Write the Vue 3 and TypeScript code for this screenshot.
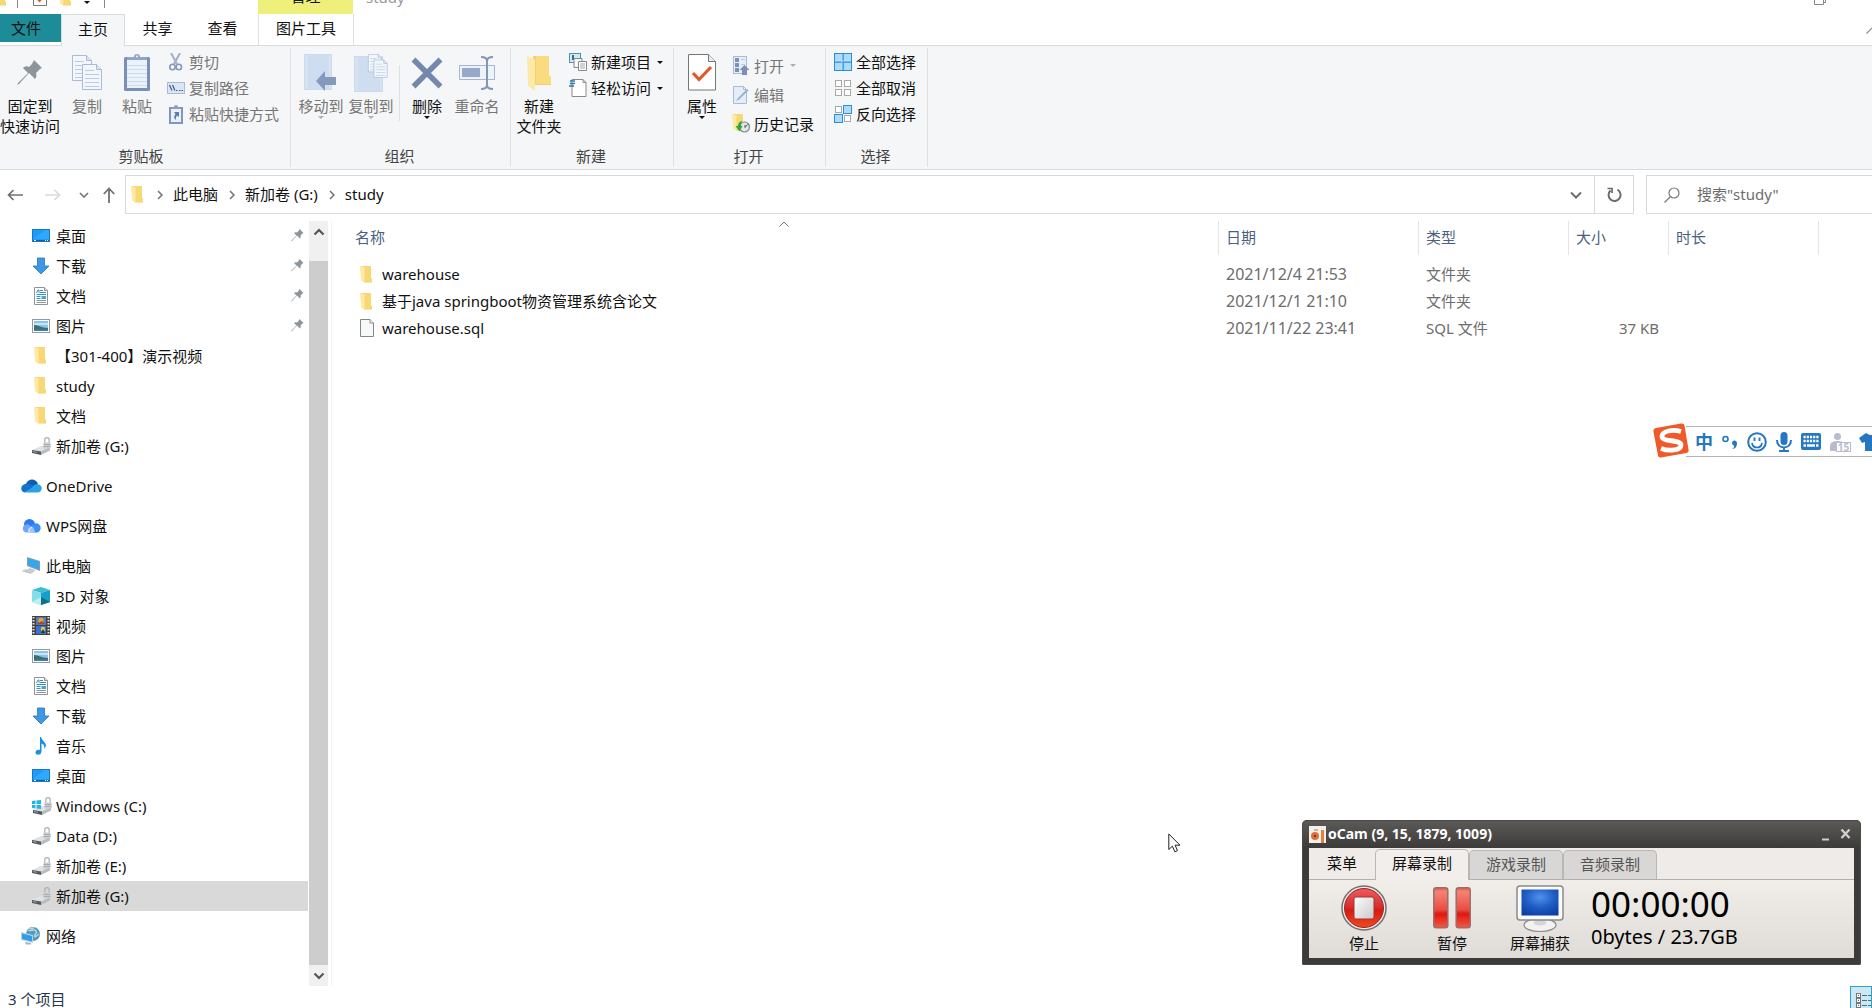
<script setup lang="ts">
import { h, ref, type FunctionalComponent } from 'vue'

interface Glyph { w: number; h: number; body: string }

const folderBody =
  '<path d="M1 1h10v12.500l1 .5v2.500H4z" fill="#f3cc62"/><path d="M1 0h10v12l1 1v3H3z" fill="#f8d775"/><path d="M0 0l4.500 1.500V16L1 14.500z" fill="#ffe9a6"/>'
const driveBody =
  '<path d="M0 13l9-4h9v3l-8 5-10-2z" fill="#dfe1e3"/><path d="M0 13l9 1.500V18l-9-2z" fill="#55575a"/><path d="M9 14.500l9-4.500v3.500L9 18z" fill="#b9bdc0"/><path d="M1 14.500l4 .8" stroke="#9a9ea1"/><path d="M12.800 6V2.800a2.200 2.200 0 0 1 4.400 0V6" fill="none" stroke="#aab0b4" stroke-width="1.200"/><rect x="11.500" y="5.500" width="7" height="6" fill="#c9cdd0"/><path d="M11.500 7.500h7M11.500 9.500h7" stroke="#9ba1a6" stroke-width=".7"/>'
const pinBody =
  '<path d="M17 0l8 8-2 1-1 1-3 3c1 3 0 5-1 6l-6-6-10 11-2 1 1-2 10-10-5-5c2-2 4-2 6-1l3-3 1-2z" fill="#8d959c"/>'
const sheet = (x: number, y: number) =>
  `<path d="M${x}.5 ${y}.5h14l5 5v20h-19z" fill="#f3f7fc" stroke="#a9bbd8"/><path d="M${x + 14}.5 ${y}.5v5h5" fill="#dce6f3" stroke="#a9bbd8"/><path d="M${x + 3} ${y + 6}.500h9M${x + 3} ${y + 10}.500h14M${x + 3} ${y + 14}.500h14M${x + 3} ${y + 18}.500h14M${x + 3} ${y + 22}.500h14" stroke="#bccbe2"/>`

const glyphs: Record<string, Glyph> = {
  folder: { w: 12, h: 17, body: folderBody },
  drive: { w: 19, h: 18, body: driveBody },
  winDrive: {
    w: 20, h: 18,
    body: `<g transform="translate(1 0)">${driveBody}</g><path d="M0 4l3.500-.5v3.500H0zM4.500 3.500L9 3v4H4.500zM0 8h3.500v3.500L0 11zM4.500 8H9v4l-4.500-.5z" fill="#22b4e6"/>`,
  },
  desktop: {
    w: 18, h: 13,
    body: '<rect x=".5" y=".5" width="17" height="12" fill="#1c9bf8" stroke="#1778c4"/><path d="M1 10L13 1h4v9z" fill="#3fb0fb" opacity=".6"/><path d="M1 11.500h16" stroke="#0d5fa8"/><path d="M2 11.500h2M13 11.500h1M15 11.500h1" stroke="#fff"/>',
  },
  download: { w: 18, h: 18, body: '<path d="M5.500 1h7v8h4.500L9 17 1 9h4.500z" fill="#3e97e4" stroke="#2477bd" stroke-width=".8"/>' },
  document: {
    w: 18, h: 18,
    body: '<path d="M2.500.5h10l3 3v14h-13z" fill="#fff" stroke="#8d959b"/><path d="M12.500.5v3h3" fill="#e4e7e9" stroke="#8d959b"/><path d="M4.500 6l1.500-3h1v3M8 3.500h3M8 5.500h6M4.500 7.500h9.500M4.500 9.500h4M4.500 11.500h4" stroke="#3193c9" fill="none"/><rect x="9.500" y="9" width="4.500" height="3" fill="#4ba3d0"/><path d="M4.500 13.500H14M4.500 15.500H14" stroke="#8c9499"/>',
  },
  picture: {
    w: 18, h: 14,
    body: '<rect x=".5" y=".5" width="17" height="13" fill="#fff" stroke="#8f9ba3"/><rect x="2" y="2" width="14" height="10" fill="#8cc4ee"/><path d="M2 4h14v2H2z" fill="#c9e4f5"/><path d="M2 6c5 0 7 3 14 3v3H2z" fill="#3c6f6d"/><path d="M2 10.500h14V12H2z" fill="#477ca6"/>',
  },
  onedrive: {
    w: 21, h: 14,
    body: '<path d="M5 5c2-6 10-6 12 0l-6 6-7-2z" fill="#0a5fb3"/><path d="M4 5c3-1.500 6 0 9 3L4 13.500C-1 13-1 6 4 5z" fill="#1373cc"/><path d="M11 8.500c2-4 5-3.500 6-3 5 0 5 7.500 0 8H4z" fill="#2ba2e8"/>',
  },
  wps: {
    w: 20, h: 14,
    body: '<circle cx="8.500" cy="5.500" r="5.500" fill="#2c7bee"/><circle cx="15" cy="9" r="4.700" fill="#3f8ef8"/><path d="M4.500 13.500a4.300 4.300 0 0 1 0-8c3-1 5 .5 6 3l4 5z" fill="#6ba7fb"/><path d="M7 13.500c-1-3 1-6 4-6 2 1 2 3 3 6z" fill="#9cc5ff"/><path d="M8 13.500c-.5-3 1-4.500 3-5.500" stroke="#fff" fill="none" stroke-width=".8"/>',
  },
  computer: {
    w: 20, h: 18,
    body: '<path d="M6 0l13 4v10L6 9z" fill="#7e9db4"/><path d="M7 1.500l11 3.500v7L7 8z" fill="#33a7ee"/><path d="M8 11l6 2-1 2-6-2z" fill="#b6c1c9"/><path d="M0 14l5-2 9 2-4 3z" fill="#d7dce0"/><path d="M2 14l8 2M4 13l8 2" stroke="#a6adb3" stroke-width=".6"/>',
  },
  cube: {
    w: 18, h: 18,
    body: '<path d="M0 3l9-3 9 3-9 3z" fill="#3bbdd2"/><path d="M0 3l9 3v12l-9-3z" fill="#82dfe8"/><path d="M18 3L9 6v12l9-3z" fill="#16a0c9"/><path d="M0 15l9-5v8z" fill="#baf0f2"/><path d="M9 10l9 5-9 3z" fill="#0b7186"/>',
  },
  video: {
    w: 18, h: 19,
    body: '<rect width="18" height="19" fill="#43413f"/><path d="M1.500 1v17M16.500 1v17" stroke="#e3e3df" stroke-width="2" stroke-dasharray="1.500 1.500"/><rect x="4" y="1" width="10" height="8" fill="#587ab9"/><rect x="4" y="10" width="10" height="8" fill="#3b73cb"/><circle cx="9" cy="4.500" r="2.700" fill="#d9a63b"/><circle cx="11" cy="13" r="2.200" fill="#e8c33d"/><path d="M5 8l5-3 3 3z" fill="#a3443e"/><path d="M9 17l2-4 2 4z" fill="#333"/>',
  },
  music: { w: 18, h: 18, body: '<path d="M8 0h1c1 4 5 5 5 9l-2 3c1-4-1-5-2.500-5.500V14c0 5-6 4.500-6 1.500 0-2 2-3.500 4.500-2.500z" fill="#1490e8"/>' },
  network: {
    w: 20, h: 18,
    body: '<circle cx="12" cy="7" r="7" fill="#5599bd"/><path d="M7 3c3 2 6-2 8 1s-3 3-1 6l4-3M8 1c2 1 4 0 5 0" stroke="#b4d8e4" fill="none" stroke-width="1.500"/><path d="M0 5l12 3v8L0 13z" fill="#b9d2e2"/><path d="M1 6.500l10 2.500v5.500L1 12z" fill="#2b9fe8"/><path d="M4 15l6 1v1.500H5z" fill="#a9b3ba"/>',
  },
  file: { w: 14, h: 18, body: '<path d="M.5.5h9.500l3.500 3.500v13.500H.5z" fill="#f7f8fa" stroke="#868686"/><path d="M10 .5v3.500h3.500" fill="#fff" stroke="#868686"/>' },
  pin: { w: 13, h: 13, body: `<g transform="scale(.5)">${pinBody}</g>` },
  bigPin: { w: 26, h: 26, body: pinBody },
  copy: { w: 30, h: 36, body: sheet(0, 0) + sheet(10, 9) },
  paste: {
    w: 26, h: 37,
    body: '<rect y="3" width="26" height="34" rx="1.500" fill="#7b8fb8"/><rect x="3" y="6" width="20" height="28" fill="#eaf2fb"/><path d="M3 11.500h20M3 15.500h20M3 19.500h20M3 23.500h20M3 27.500h20M3 31.500h20" stroke="#ccdced"/><path d="M3 3h7a3 3 0 0 1 6 0h7v3H3z" fill="#93a5c7"/><circle cx="13" cy="2.500" r="1" fill="#f5f6f7"/>',
  },
  cut: {
    w: 18, h: 18,
    body: '<path d="M4 0l6 11M13 0L7 11" stroke="#a3b0c8" stroke-width="2"/><circle cx="5.500" cy="14" r="2.700" fill="none" stroke="#8497bb" stroke-width="1.600"/><circle cx="11.800" cy="14" r="2.700" fill="none" stroke="#8497bb" stroke-width="1.600"/>',
  },
  path: { w: 18, h: 12, body: '<rect x=".5" y=".5" width="17" height="11" fill="#dbe6f5" stroke="#a9bbd8"/><path d="M2.500 3l2.500 5.500M5.500 3L8 8.500" stroke="#42597f" stroke-width="1.200"/><path d="M9 8.500h1.500M12 8.500h1.500M14.500 8.500H16" stroke="#42597f" stroke-width="1.200"/>' },
  shortcut: {
    w: 18, h: 19,
    body: '<rect x="2" y="2" width="14" height="17" fill="#8096bd"/><rect x="4" y="4" width="10" height="13" fill="#eaf1fa"/><path d="M5 2h2a2 2 0 0 1 4 0h2v2H5z" fill="#8da0c3"/><path d="M7 7h5v5l-2-1.500C9 12 9 13 8.500 15c-2-2-1.500-4 0-6z" fill="#5a7cb3"/>',
  },
  moveTo: {
    w: 34, h: 37,
    body: '<rect x=".5" y=".5" width="27" height="35" fill="#d7e3f3" stroke="#ccdaec"/><path d="M4 1h21v34H4z" fill="#cfddf0"/><path d="M12 27l9-10v6h11v8H21v6z" fill="#8599bd"/>',
  },
  copyTo: {
    w: 34, h: 38,
    body: `<rect x=".5" y="2.500" width="28" height="35" fill="#d7e3f3" stroke="#ccdaec"/><path d="M4 3h22v34H4z" fill="#cfddf0"/><g transform="translate(14 0) scale(.7)">${sheet(0, 0)}${sheet(8, 8)}</g>`,
  },
  remove: { w: 32, h: 32, body: '<path d="M2.500 2.500l27 27M29.500 2.500l-27 27" stroke="#7488ae" stroke-width="5.500"/>' },
  rename: {
    w: 36, h: 34,
    body: '<rect x=".5" y="9.500" width="35" height="14" fill="#edf3fa" stroke="#a6b8d6"/><rect x="3" y="12" width="18" height="9" fill="#96a9ca"/><path d="M22 1c4 0 6 1 6 4v24c0 3-2 4-6 4M34 1c-4 0-6 1-6 4v24c0 3 2 4 6 4" fill="none" stroke="#8496b5" stroke-width="2"/>',
  },
  newFolder: { w: 24, h: 36, body: '<path d="M6 1h16v20l2 1v8H8z" fill="#f5cf68"/><path d="M9 1h13v20l2 1v7H9z" fill="#fadb80"/><path d="M0 1l8 4v31l-7-5z" fill="#ffe9a8"/>' },
  newItem: {
    w: 18, h: 18,
    body: '<rect x=".5" y=".5" width="11" height="9" fill="#d2e9f2" stroke="#4c91ae"/><path d="M4 2v5" stroke="#356f92" stroke-width="2"/><path d="M5 5.500h8v9H5z" fill="#f6f7f8" stroke="#888"/><path d="M9.500 8.500h8v9h-8z" fill="#fff" stroke="#888"/><path d="M11 11h5M11 13h5M11 15h5" stroke="#9aa"/>',
  },
  easyAccess: { w: 18, h: 18, body: '<path d="M3 .5h11l3 3v14H3z" fill="#fff" stroke="#8a8a8a"/><path d="M14 .5v3h3" fill="none" stroke="#8a8a8a"/><path d="M0 7h5M1 4.500h5M1 2h5" stroke="#2a77ae" stroke-width="1.300"/>' },
  properties: {
    w: 28, h: 37,
    body: '<path d="M.5.5h20l7 7v28.500H.5z" fill="#fff" stroke="#777"/><path d="M20.500.5v7h7" fill="#ededed" stroke="#777"/><path d="M5 19l6 6.500L23 13" fill="none" stroke="#e05a28" stroke-width="3.200"/>',
  },
  open: {
    w: 18, h: 19,
    body: '<rect x="1.500" y=".5" width="13" height="17" fill="#e7eef8" stroke="#a9bbd8"/><path d="M3 2h4v4H3zM3 7h4v4H3zM3 12h4v4H3z" fill="#7d90b8"/><path d="M9 3.500h4M9 8.500h4" stroke="#bccbe2"/><path d="M12.500 9l5 5H15v5h-5v-5H7.500z" fill="#7d8fb4"/>',
  },
  edit: { w: 18, h: 18, body: '<path d="M1.500.5h10l3 3v14h-13z" fill="#e5edf8" stroke="#a9bbd8"/><path d="M11.500.5v3h3" fill="none" stroke="#a9bbd8"/><path d="M4 15l2-3L15 3l1.500 1.500L7 13.500z" fill="#9aaed1"/>' },
  history: {
    w: 18, h: 19,
    body: `<g>${folderBody}</g><circle cx="12.500" cy="13" r="5" fill="#e3e5e6" stroke="#83898d" stroke-width="1.200"/><path d="M13 11v2.500l2.500-3" stroke="#555" fill="none"/><path d="M10 6.500c-3 1.500-4 3.500-4 5.500H3.500l4 5.500 3-5.500H9c0-2 .5-4 1-5.500z" fill="#2fa83b"/>`,
  },
  selectAll: { w: 18, h: 18, body: '<rect x=".5" y=".5" width="17" height="17" fill="#a9dcff" stroke="#2f8cd6"/><path d="M9 0v18M0 9h18" stroke="#2f8cd6" stroke-width="1.500"/><path d="M8 1v16M1 8h16" stroke="#d5efff" stroke-width=".6"/>' },
  selectNone: { w: 18, h: 18, body: '<g fill="#fff" stroke="#a9a9a9"><rect x="1.500" y="1.500" width="6" height="6"/><rect x="10.500" y="1.500" width="6" height="6"/><rect x="1.500" y="10.500" width="6" height="6"/><rect x="10.500" y="10.500" width="6" height="6"/></g>' },
  invert: { w: 18, h: 18, body: '<g fill="#fff" stroke="#a9a9a9"><rect x="1.500" y="1.500" width="6" height="6"/><rect x="10.500" y="10.500" width="6" height="6"/></g><g fill="#a9dcff" stroke="#2f8cd6"><rect x="9.500" y=".5" width="8" height="8"/><rect x=".5" y="9.500" width="8" height="8"/></g>' },
  caret: { w: 6, h: 3, body: '<path d="M0 0h6L3 3z" fill="currentColor"/>' },
  checkDoc: { w: 14, h: 18, body: '<path d="M.5.5h13v17H.5z" fill="#fff" stroke="#777"/><path d="M3 9l3.500 4L11 8" fill="none" stroke="#e05a28" stroke-width="2"/>' },
  restore: { w: 12, h: 12, body: '<path d="M.5 2.500h9v9h-9zM2.500 2.500v-2h9v9h-2" fill="none" stroke="#888"/>' },
  collapse: { w: 14, h: 8, body: '<path d="M.5 7.500l6.500-6.500 6.500 6.500" fill="none" stroke="#8a8a8a" stroke-width="1.200"/>' },
  back: { w: 16, h: 12, body: '<path d="M16 6H1.500M6.500 1l-5 5 5 5" fill="none" stroke="#707070" stroke-width="1.700"/>' },
  forward: { w: 16, h: 12, body: '<path d="M0 6h14.500M9.500 1l5 5-5 5" fill="none" stroke="#dadada" stroke-width="1.700"/>' },
  up: { w: 12, h: 16, body: '<path d="M6 16V1.500M.8 7l5.200-5.500L11.200 7" fill="none" stroke="#707070" stroke-width="1.800"/>' },
  down: { w: 12, h: 8, body: '<path d="M1 1.500l5 5 5-5" fill="none" stroke="#6c6c6c" stroke-width="2"/>' },
  downSmall: { w: 10, h: 6, body: '<path d="M1 1l4 4 4-4" fill="none" stroke="#777" stroke-width="1.700"/>' },
  right: { w: 6, h: 10, body: '<path d="M1 1l4 4-4 4" fill="none" stroke="#707070" stroke-width="1.500"/>' },
  refresh: { w: 16, h: 17, body: '<path d="M4.500 4.500A6 6 0 1 0 11.500 3.700" fill="none" stroke="#6c6c6c" stroke-width="2"/><path d="M1.500 2.500H6V7" fill="none" stroke="#6c6c6c" stroke-width="1.700"/>' },
  search: { w: 16, h: 16, body: '<circle cx="10" cy="6" r="5" fill="none" stroke="#7a7a7a" stroke-width="1.200"/><path d="M6.500 9.500L.5 15.500" stroke="#7a7a7a" stroke-width="1.200"/>' },
  sort: { w: 10, h: 6, body: '<path d="M.5 5.500L5 1l4.500 4.500" fill="none" stroke="#777"/>' },
  scrollUp: { w: 12, h: 8, body: '<path d="M1.500 6.500L6 2l4.500 4.500" fill="none" stroke="#555" stroke-width="2.200"/>' },
  scrollDown: { w: 12, h: 8, body: '<path d="M1.500 1.500L6 6l4.500-4.500" fill="none" stroke="#555" stroke-width="2.200"/>' },
  details: {
    w: 24, h: 24,
    body: '<g fill="#fff" stroke="#777"><rect x=".5" y=".5" width="4" height="4"/><rect x=".5" y="5.500" width="4" height="4"/><rect x=".5" y="10.500" width="4" height="4"/></g><path d="M2 2.500h1M2 7.500h1M2 12.500h1M6 2.500h5M12 2.500h5M6 7.500h5M12 7.500h5M6 12.500h5M12 12.500h5" stroke="#4b6f82"/>',
  },
  sogou: {
    w: 36, h: 35,
    body: '<path d="M3 5L28 .5q3-.5 3.500 2l4 24q.5 3-2 3.500L8 34.500q-2.500.5-3-2L.5 9q-.5-3.500 2.500-4z" fill="#f05a28"/><path d="M28 8.500C20 6 9 8 9 13.500c0 6 19 2.500 19 8.500 0 5.500-12 6.500-20 3.500" fill="none" stroke="#fff" stroke-width="4.800"/>',
  },
  punct: { w: 16, h: 16, body: '<circle cx="3.500" cy="5" r="2.500" fill="none" stroke="#2477c0" stroke-width="1.600"/><path d="M10 15c2-1 2.200-2 2-3.500a2.500 2.500 0 1 1 3-2.500c0 3-1.500 6-5 6z" fill="#2477c0"/>' },
  smile: { w: 20, h: 20, body: '<circle cx="10" cy="10" r="8.800" fill="none" stroke="#2477c0" stroke-width="2"/><path d="M5 11c1 6 9 6 10 0" fill="none" stroke="#2477c0" stroke-width="1.700"/><path d="M7.500 5.500v3.500M12.500 5.500v3.500" stroke="#2477c0" stroke-width="1.900"/>' },
  mic: { w: 16, h: 20, body: '<rect x="4.500" width="7" height="13" rx="3.500" fill="#2477c0"/><path d="M1 8c0 10 14 10 14 0M8 15v4M3 19h10" fill="none" stroke="#2477c0" stroke-width="2"/>' },
  keyboard: { w: 20, h: 17, body: '<rect width="20" height="17" rx="2" fill="#2477c0"/><path d="M2.500 4h15M2.500 8h15" stroke="#fff" stroke-width="2.600" stroke-dasharray="2.200 1"/><path d="M2.500 12.500h2.500M6 12.500h8M15 12.500h2.500" stroke="#fff" stroke-width="2.400"/>' },
  person: { w: 20, h: 18, body: '<circle cx="7.500" cy="3.500" r="3.500" fill="#b9bcd0"/><path d="M0 18V13q0-5 7.500-5 6 0 7 3H6v7z" fill="#b9bcd0"/>' },
  shirt: { w: 24, h: 18, body: '<path d="M7 0q5 4 10 0l7 5-3 5-3-1v9H6V9L3 10 0 5z" fill="#2477c0"/>' },
  ocam: { w: 17, h: 17, body: '<rect width="17" height="17" fill="#f4efea"/><circle cx="6" cy="10" r="4" fill="#d9743f"/><circle cx="6" cy="10" r="1.300" fill="#873d1c"/><rect x="12" y="4" width="3" height="13" fill="#e2803f"/><path d="M5 4h4" stroke="#9a7864"/>' },
  minimise: { w: 8, h: 14, body: '<path d="M0 12.500h7" stroke="#cfcfcf" stroke-width="2"/>' },
  close: { w: 12, h: 12, body: '<path d="M1.500 1.500l8 8.500M9.500 1.500l-8 8.500" stroke="#cfcfcf" stroke-width="2.400"/>' },
  stop: {
    w: 46, h: 46,
    body: '<defs><linearGradient id="stopRed" x1="0" y1="0" x2="0" y2="1"><stop offset="0" stop-color="#ee5c5c"/><stop offset=".5" stop-color="#d22b2f"/><stop offset=".55" stop-color="#d51a10"/><stop offset="1" stop-color="#f04a22"/></linearGradient><linearGradient id="stopSq" x1="0" y1="0" x2="1" y2="1"><stop offset="0" stop-color="#fff"/><stop offset="1" stop-color="#c9c6c6"/></linearGradient></defs><circle cx="23" cy="23" r="22" fill="#efefef" stroke="#77706e" stroke-width="1.500"/><circle cx="23" cy="23" r="19.500" fill="url(#stopRed)" stroke="#9f2420"/><rect x="13" y="12" width="20" height="22" rx="2" fill="url(#stopSq)" stroke="#a33"/>',
  },
  pause: {
    w: 38, h: 42,
    body: '<defs><linearGradient id="pauseRed" x1="0" y1="0" x2="0" y2="1"><stop offset="0" stop-color="#e8554a"/><stop offset=".1" stop-color="#f38376"/><stop offset=".55" stop-color="#e94d41"/><stop offset=".65" stop-color="#de170f"/><stop offset="1" stop-color="#f45a45"/></linearGradient></defs><rect x=".8" y=".8" width="14" height="40" rx="2.500" fill="url(#pauseRed)" stroke="#9b6d69" stroke-width="1.500"/><rect x="23.200" y=".8" width="14" height="40" rx="2.500" fill="url(#pauseRed)" stroke="#9b6d69" stroke-width="1.500"/>',
  },
  screen: {
    w: 48, h: 48,
    body: '<defs><radialGradient id="screenBlue" cx=".5" cy=".3" r=".8"><stop offset="0" stop-color="#4f93ea"/><stop offset=".5" stop-color="#1f5cc4"/><stop offset="1" stop-color="#0c3ba0"/></radialGradient></defs><ellipse cx="24" cy="40" rx="16" ry="6.500" fill="#f2f2f2" stroke="#888" stroke-width="1.200"/><path d="M18 34h12v5q-6 3-12 0z" fill="#d6d6d6"/><rect x="1" y="1" width="46" height="34" rx="3" fill="#fafafa" stroke="#8a8a8a" stroke-width="1.500"/><rect x="5.500" y="4.500" width="37" height="26" fill="url(#screenBlue)"/>',
  },
  cursor: { w: 13, h: 20, body: '<path d="M.8 1v15.500l3.600-3.300 2.500 5.600 2.600-1.100-2.400-5.500h4.900z" fill="#fff" stroke="#222"/>' },
}

const Icon: FunctionalComponent<{ name: string }> = (props) => {
  const g = glyphs[props.name]
  return h('svg', { width: g.w, height: g.h, viewBox: `0 0 ${g.w} ${g.h}`, 'aria-hidden': 'true', innerHTML: g.body })
}
Icon.props = ['name']

interface Command { icon: string; lines: string[]; dim?: boolean; menu?: boolean; divided?: boolean }
interface Group { id: string; title: string; big: Command[]; small: Command[] }

const groups: Group[] = [
  {
    id: 'clipboard', title: '剪贴板',
    big: [
      { icon: 'bigPin', lines: ['固定到', '快速访问'] },
      { icon: 'copy', lines: ['复制'], dim: true },
      { icon: 'paste', lines: ['粘贴'], dim: true },
    ],
    small: [
      { icon: 'cut', lines: ['剪切'], dim: true },
      { icon: 'path', lines: ['复制路径'], dim: true },
      { icon: 'shortcut', lines: ['粘贴快捷方式'], dim: true },
    ],
  },
  {
    id: 'organize', title: '组织',
    big: [
      { icon: 'moveTo', lines: ['移动到'], dim: true, menu: true },
      { icon: 'copyTo', lines: ['复制到'], dim: true, menu: true },
      { icon: 'remove', lines: ['删除'], menu: true, divided: true },
      { icon: 'rename', lines: ['重命名'], dim: true },
    ],
    small: [],
  },
  {
    id: 'create', title: '新建',
    big: [{ icon: 'newFolder', lines: ['新建', '文件夹'] }],
    small: [
      { icon: 'newItem', lines: ['新建项目'], menu: true },
      { icon: 'easyAccess', lines: ['轻松访问'], menu: true },
    ],
  },
  {
    id: 'open', title: '打开',
    big: [{ icon: 'properties', lines: ['属性'], menu: true }],
    small: [
      { icon: 'open', lines: ['打开'], dim: true, menu: true },
      { icon: 'edit', lines: ['编辑'], dim: true },
      { icon: 'history', lines: ['历史记录'] },
    ],
  },
  {
    id: 'select', title: '选择', big: [],
    small: [
      { icon: 'selectAll', lines: ['全部选择'] },
      { icon: 'selectNone', lines: ['全部取消'] },
      { icon: 'invert', lines: ['反向选择'] },
    ],
  },
]

interface Place { icon: string; label: string; pinned?: boolean; root?: boolean; current?: boolean }
const places: Place[][] = [
  [
    { icon: 'desktop', label: '桌面', pinned: true },
    { icon: 'download', label: '下载', pinned: true },
    { icon: 'document', label: '文档', pinned: true },
    { icon: 'picture', label: '图片', pinned: true },
    { icon: 'folder', label: '【301-400】演示视频' },
    { icon: 'folder', label: 'study' },
    { icon: 'folder', label: '文档 ' },
    { icon: 'drive', label: '新加卷 (G:)' },
  ],
  [{ icon: 'onedrive', label: 'OneDrive', root: true }],
  [{ icon: 'wps', label: 'WPS网盘', root: true }],
  [
    { icon: 'computer', label: '此电脑', root: true },
    { icon: 'cube', label: '3D 对象' },
    { icon: 'video', label: '视频' },
    { icon: 'picture', label: '图片' },
    { icon: 'document', label: '文档' },
    { icon: 'download', label: '下载' },
    { icon: 'music', label: '音乐' },
    { icon: 'desktop', label: '桌面' },
    { icon: 'winDrive', label: 'Windows (C:)' },
    { icon: 'drive', label: 'Data (D:)' },
    { icon: 'drive', label: '新加卷 (E:)' },
    { icon: 'drive', label: '新加卷 (G:)', current: true },
  ],
  [{ icon: 'network', label: '网络', root: true }],
]

const crumbs = ['此电脑', '新加卷 (G:)', 'study']
const files = [
  { icon: 'folder', name: 'warehouse', date: '2021/12/4 21:53', type: '文件夹', size: '' },
  { icon: 'folder', name: '基于java springboot物资管理系统含论文', date: '2021/12/1 21:10', type: '文件夹', size: '' },
  { icon: 'file', name: 'warehouse.sql', date: '2021/11/22 23:41', type: 'SQL 文件', size: '37 KB' },
]
const recorderTabs = ['屏幕录制', '游戏录制', '音频录制']
const activeTab = ref('屏幕录制')
const query = ref('')
</script>

<template>
  <div class="window">
    <header class="titlebar">
      <div class="title-row">
        <Icon name="folder" class="app-icon" />
        <span class="bar"></span>
        <button class="plain quick" aria-label="属性"><Icon name="checkDoc" /></button>
        <button class="plain quick" aria-label="新建文件夹"><Icon name="folder" /></button>
        <button class="plain quick arrow" aria-label="自定义"><Icon name="caret" /></button>
        <span class="bar"></span>
        <span class="context">管理</span>
        <h1>study</h1>
        <button class="plain restore" aria-label="还原"><Icon name="restore" /></button>
      </div>
    </header>

    <nav class="tabs">
      <button class="tab file">文件</button>
      <button class="tab active">主页</button>
      <button class="tab">共享</button>
      <button class="tab">查看</button>
      <button class="tab tools">图片工具</button>
      <button class="plain collapse" aria-label="折叠功能区"><Icon name="collapse" /></button>
    </nav>

    <section class="ribbon">
      <div v-for="g in groups" :key="g.id" class="group" :class="g.id">
        <div class="group-body">
          <template v-for="c in g.big" :key="c.icon">
            <span v-if="c.divided" class="divider"></span>
            <button class="plain big" :class="{ dim: c.dim }">
              <span class="big-icon"><Icon :name="c.icon" /></span>
              <span v-for="l in c.lines" :key="l">{{ l }}</span>
              <Icon v-if="c.menu" name="caret" />
            </button>
          </template>
          <div v-if="g.small.length" class="stack">
            <button v-for="c in g.small" :key="c.icon" class="plain small" :class="{ dim: c.dim }">
              <Icon :name="c.icon" /><span>{{ c.lines[0] }}</span><Icon v-if="c.menu" name="caret" />
            </button>
          </div>
        </div>
        <div class="group-title">{{ g.title }}</div>
      </div>
    </section>

    <section class="address">
      <div class="history">
        <button class="plain" aria-label="后退"><Icon name="back" /></button>
        <button class="plain" aria-label="前进"><Icon name="forward" /></button>
        <button class="plain" aria-label="最近"><Icon name="downSmall" /></button>
        <button class="plain" aria-label="上移"><Icon name="up" /></button>
      </div>
      <div class="location">
        <Icon name="folder" />
        <template v-for="c in crumbs" :key="c">
          <Icon name="right" class="chevron" /><a href="#" class="crumb">{{ c }}</a>
        </template>
        <button class="plain expand" aria-label="展开"><Icon name="down" /></button>
        <button class="plain refresh" aria-label="刷新"><Icon name="refresh" /></button>
      </div>
      <label class="search">
        <Icon name="search" />
        <input v-model="query" type="text" aria-label="搜索" placeholder="搜索&quot;study&quot;" />
      </label>
    </section>

    <main class="content">
      <nav class="side">
        <ul v-for="(set, i) in places" :key="i">
          <li v-for="p in set" :key="p.label">
            <a href="#" class="place" :class="{ root: p.root, current: p.current }">
              <span class="place-icon"><Icon :name="p.icon" /></span>
              <span>{{ p.label }}</span>
              <Icon v-if="p.pinned" name="pin" class="pin" />
            </a>
          </li>
        </ul>
      </nav>
      <div class="scroll">
        <button class="plain" aria-label="向上滚动"><Icon name="scrollUp" /></button>
        <span class="thumb"></span>
        <button class="plain" aria-label="向下滚动"><Icon name="scrollDown" /></button>
      </div>
      <div class="list">
        <table>
          <thead>
            <tr>
              <th class="name">名称<Icon name="sort" class="sort" /></th>
              <th class="date">日期</th>
              <th class="type">类型</th>
              <th class="size">大小</th>
              <th class="length">时长</th>
            </tr>
          </thead>
          <tbody>
            <tr v-for="f in files" :key="f.name">
              <td><div class="file-name"><span class="file-icon"><Icon :name="f.icon" /></span>{{ f.name }}</div></td>
              <td class="when">{{ f.date }}</td>
              <td>{{ f.type }}</td>
              <td class="number">{{ f.size }}</td>
              <td></td>
            </tr>
          </tbody>
        </table>
      </div>
    </main>

    <footer class="status">
      <span>3 个项目</span>
      <button class="plain view" aria-label="详细信息"><Icon name="details" /></button>
    </footer>

    <aside class="ime">
      <Icon name="sogou" class="ime-logo" />
      <span class="zh">中</span>
      <Icon name="punct" />
      <Icon name="smile" />
      <Icon name="mic" />
      <Icon name="keyboard" />
      <span class="person"><Icon name="person" /><b>15</b></span>
      <Icon name="shirt" />
    </aside>

    <section class="recorder">
      <div class="rec-title">
        <Icon name="ocam" /><strong>oCam (9, 15, 1879, 1009)</strong>
        <button class="plain" aria-label="最小化"><Icon name="minimise" /></button>
        <button class="plain" aria-label="关闭"><Icon name="close" /></button>
      </div>
      <div class="rec-tabs">
        <button class="plain rec-menu">菜单</button>
        <button v-for="t in recorderTabs" :key="t" class="plain rec-tab" :class="{ on: t === activeTab }" @click="activeTab = t">{{ t }}</button>
      </div>
      <div class="rec-body">
        <button class="plain action"><span class="pic"><Icon name="stop" /></span>停止</button>
        <button class="plain action"><span class="pic"><Icon name="pause" /></span>暂停</button>
        <button class="plain action"><span class="pic"><Icon name="screen" /></span>屏幕捕获</button>
        <div class="readout"><div class="clock">00:00:00</div><div class="bytes">0bytes / 23.7GB</div></div>
      </div>
    </section>

    <Icon name="cursor" class="cursor" />
  </div>
</template>

<style>
body { margin: 0; }
</style>

<style scoped>
.window {
  position: relative;
  display: flex;
  flex-direction: column;
  height: 100vh;
  overflow: hidden;
  background: #fff;
  color: #111;
  font: 15px/20px "Noto Sans", "Noto Sans CJK SC", sans-serif;
}
svg { display: block; flex: none; }
button { font: inherit; color: inherit; }
.plain { display: flex; align-items: center; justify-content: center; padding: 0; border: 0; background: none; }
a { color: inherit; text-decoration: none; }

.titlebar { display: flex; flex: none; align-items: flex-end; height: 14px; overflow: hidden; }
.title-row { display: flex; flex: 1; align-items: center; height: 34px; }
.app-icon { margin-left: -6px; }
.bar { width: 1px; height: 22px; margin: 0 0 0 11px; background: #888; }
.quick { margin-left: 15px; }
.quick + .quick { margin-left: 12px; }
.quick.arrow { margin: 10px 0 0 13px; }
.quick.arrow + .bar { margin-left: 14px; }
.context { width: 95px; height: 34px; margin-left: 153px; background: #eff07c; text-align: center; line-height: 32px; }
h1 { flex: 1; margin: 0 0 0 13px; color: #999; font: inherit; line-height: 34px; }
.restore { margin: 4px 46px 0 0; }

.tabs { display: flex; flex: none; height: 31px; border-bottom: 1px solid #dadbdc; }
.tab { width: 65px; height: 31px; padding: 0 0 3px; border: 0; background: none; }
.tab.file { width: 61px; height: 28px; padding: 0 9px 0 0; background: #1e8b98; }
.tab.active { width: 64px; height: 32px; border: 1px solid #dadbdc; border-bottom: 0; background: #f5f6f7; }
.tab.tools { width: 96px; margin-left: 3px; border: solid #e2e2e2; border-width: 0 1px; }
.collapse { margin: 0 -8px 0 auto; }

.ribbon { display: flex; flex: none; height: 123px; border-bottom: 1px solid #dadbdc; background: #f5f6f7; }
.group { display: flex; flex-direction: column; box-sizing: border-box; margin: 2px 0; padding-bottom: 1px; border-right: 1px solid #dfe1e3; }
.clipboard { width: 291px; }
.organize { width: 220px; }
.create { width: 163px; }
.open { width: 152px; }
.select { width: 102px; }
.group-body { display: flex; flex: 1; align-items: flex-start; padding: 1px 0 0 3px; }
.clipboard .group-body { padding-left: 0; }
.organize .group-body { padding-left: 5px; }
.group-title { padding-right: 2px; color: #444; text-align: center; }
.clipboard .group-title { padding-right: 8px; }
.big { flex-direction: column; width: 50px; white-space: nowrap; }
.clipboard .big:first-child { width: 60px; margin-right: 2px; }
.big-icon { display: flex; align-items: center; height: 47px; }
.dim { color: #757575; }
.divider { width: 1px; height: 56px; margin: 16px 2px 0 3px; background: #dfe1e3; }
.stack { display: flex; flex-direction: column; margin: 0 0 0 5px; }
.small { justify-content: flex-start; gap: 4px; height: 26px; }
.small svg:last-child:not(:first-child) { margin-left: 2px; }
.open .small { height: 29px; }
.open .stack { margin-top: 2px; }
.small.dim svg:last-child:not(:first-child), .big.dim > svg { color: #b0b0b0; }

.address { display: flex; flex: none; align-items: center; margin-top: 5px; height: 39px; }
.history { display: flex; align-items: center; gap: 14px; width: 118px; padding-left: 7px; }
.history button:nth-child(2) { margin: 0 4px 0 8px; }
.location { display: flex; flex: 1; align-items: center; box-sizing: border-box; height: 39px; margin-right: 12px; padding-left: 5px; border: 1px solid #d9d9d9; }
.chevron { margin: 0 10px 0 11px; }
.location > svg:first-child { margin-right: 3px; }
.crumb { padding-bottom: 2px; }
.expand { width: 36px; height: 37px; margin-left: auto; }
.refresh { width: 39px; height: 37px; border-left: 1px solid #d9d9d9; }
.search { display: flex; align-items: center; box-sizing: border-box; width: 226px; height: 39px; padding-left: 17px; border: 1px solid #d9d9d9; border-right: 0; }
.search input { flex: 1; min-width: 0; margin-left: 17px; padding: 0 0 2px; border: 0; outline: 0; background: none; font: inherit; }
.search input::placeholder { color: #6d6d6d; opacity: 1; }

.content { display: flex; flex: 1; min-height: 0; padding-top: 7px; }
.side { width: 308px; margin-right: 1px; overflow: hidden; }
ul { margin: 0 0 10px; padding: 0; list-style: none; }
.place { display: flex; align-items: center; box-sizing: border-box; height: 30px; padding: 0 0 1px 32px; white-space: nowrap; }
.place.root { padding-left: 21px; }
.place.current { background: #d9d9d9; }
.place-icon { display: flex; width: 24px; }
.root .place-icon { width: 25px; }
.place-icon svg[width="12"] { margin-left: 2px; }
.pin { margin: 0 4px 0 auto; }
.scroll { display: flex; flex-direction: column; width: 19px; background: #f0f0f0; }
.scroll button { height: 21px; }
.scroll button:first-child { height: 40px; padding-bottom: 18px; box-sizing: border-box; }
.thumb { flex: 1; background: #cdcdcd; }
.list { flex: 1; margin-left: 3px; padding-right: 53px; border-left: 1px solid #f3f3f3; }
table { width: 100%; border-collapse: separate; border-spacing: 0; table-layout: fixed; }
th { box-sizing: border-box; height: 34px; padding: 0 0 3px 7px; border-right: 1px solid #e5e5e5; color: #4c5f7f; font-weight: 400; text-align: left; }
th.name { position: relative; padding-left: 23px; }
.sort { position: absolute; top: 0; left: 50%; margin-left: 4px; }
th.date { width: 200px; }
th.type { width: 150px; }
th.size { width: 100px; }
th.length { width: 150px; }
tbody::before { display: block; height: 6px; content: ""; }
td { box-sizing: border-box; height: 27px; padding: 0 0 1px 7px; color: #6d6d6d; }
td.when { font-size: 16px; }
td.number { padding-right: 10px; text-align: right; }
.file-name { display: flex; align-items: center; padding-left: 21px; color: #111; }
.file-icon { width: 22px; }

.status { display: flex; flex: none; justify-content: space-between; height: 22px; padding-left: 8px; color: #24364f; }
.status span { padding-top: 4px; line-height: 18px; }
.view { box-sizing: border-box; width: 22px; height: 30px; padding: 6px 0 0 5px; align-items: flex-start; justify-content: flex-start; border: 1px solid #2f9fce; background: #cce8f3; overflow: hidden; }

.ime { position: absolute; top: 426px; right: 0; display: flex; align-items: center; gap: 9px; box-sizing: border-box; width: 186px; height: 31px; padding-left: 9px; border: solid #b4b4b4; border-width: 1px 0; background: #fff; clip-path: inset(-6px 0 -6px -36px); }
.ime-logo { position: absolute; top: -4px; left: -33px; }
.zh { width: 21px; color: #2477c0; font-size: 18px; font-weight: 700; }
.person { position: relative; }
.person b { position: absolute; right: -1px; bottom: -1px; width: 13px; border: 1px solid #b9bcd0; background: #fff; color: #b9bcd0; font-size: 10px; line-height: 8px; text-align: center; }

.recorder { position: absolute; right: 11px; bottom: 43px; box-sizing: border-box; width: 559px; padding: 0 7px 7px; border-radius: 5px 5px 2px 2px; background: linear-gradient(#5d5b58, #3c3b39 28px); box-shadow: inset 0 0 0 1px #4b4a48; }
.rec-title { display: flex; align-items: center; gap: 10px; height: 28px; padding-right: 2px; color: #fff; }
.rec-title strong { flex: 1; margin-left: -8px; padding-bottom: 1px; font-size: 14px; }
.rec-tabs { display: flex; align-items: flex-end; height: 31px; border-bottom: 1px solid #b1b0ae; background: #efebe8; color: #111; }
.rec-menu { width: 66px; height: 31px; padding-bottom: 2px; }
.rec-tab { box-sizing: border-box; width: 94px; height: 29px; padding-bottom: 3px; border: 1px solid #b9b8b7; border-bottom: 0; border-radius: 5px 5px 0 0; background: #d9d7d6; color: #555; }
.rec-tab.on { height: 31px; margin-bottom: -1px; padding-bottom: 5px; background: #f1eeeb; color: #111; }
.rec-body { display: flex; height: 78px; padding-left: 11px; background: linear-gradient(#f1eeea, #dfdbd7); }
.action { flex-direction: column; justify-content: flex-start; width: 88px; height: 78px; }
.pic { display: flex; align-items: flex-end; height: 53px; }
.action:nth-child(2) .pic { align-items: center; padding-top: 2px; height: 51px; }
.action:first-child .pic { align-items: center; padding-top: 2px; height: 51px; }
.readout { margin-left: 7px; color: #000; white-space: nowrap; }
.clock { font-size: 35px; line-height: 48px; }
.bytes { font-size: 20px; line-height: 18px; }

.cursor { position: absolute; top: 833px; left: 1168px; }
</style>
